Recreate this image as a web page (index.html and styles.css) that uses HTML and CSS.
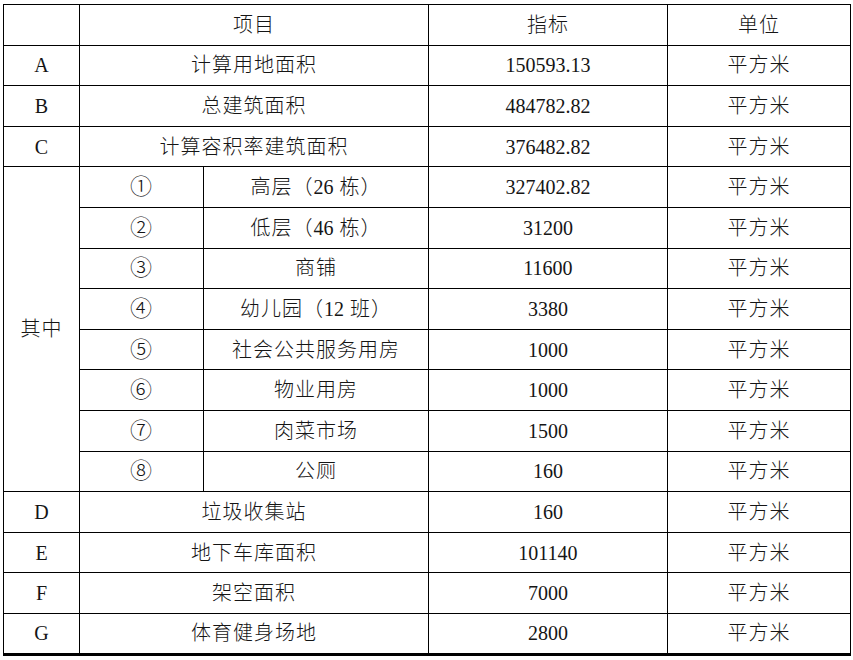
FILE: index.html
```html
<!DOCTYPE html>
<html lang="zh">
<head>
<meta charset="utf-8">
<link rel="stylesheet" href="styles.css">
</head>
<body>
<table class="tbl">
  <colgroup>
    <col class="c1"><col class="c2"><col class="c3"><col class="c4"><col class="c5">
  </colgroup>
  <tr><td></td><td colspan="2">项目</td><td>指标</td><td>单位</td></tr>
  <tr><td class="num">A</td><td colspan="2">计算用地面积</td><td class="num">150593.13</td><td>平方米</td></tr>
  <tr><td class="num">B</td><td colspan="2">总建筑面积</td><td class="num">484782.82</td><td>平方米</td></tr>
  <tr><td class="num">C</td><td colspan="2">计算容积率建筑面积</td><td class="num">376482.82</td><td>平方米</td></tr>
  <tr><td rowspan="8">其中</td><td class="circ">①</td><td>高层（<span class="n">26</span> 栋）</td><td class="num">327402.82</td><td>平方米</td></tr>
  <tr><td class="circ">②</td><td>低层（<span class="n">46</span> 栋）</td><td class="num">31200</td><td>平方米</td></tr>
  <tr><td class="circ">③</td><td>商铺</td><td class="num">11600</td><td>平方米</td></tr>
  <tr><td class="circ">④</td><td>幼儿园（<span class="n">12</span> 班）</td><td class="num">3380</td><td>平方米</td></tr>
  <tr><td class="circ">⑤</td><td>社会公共服务用房</td><td class="num">1000</td><td>平方米</td></tr>
  <tr><td class="circ">⑥</td><td>物业用房</td><td class="num">1000</td><td>平方米</td></tr>
  <tr><td class="circ">⑦</td><td>肉菜市场</td><td class="num">1500</td><td>平方米</td></tr>
  <tr><td class="circ">⑧</td><td>公厕</td><td class="num">160</td><td>平方米</td></tr>
  <tr><td class="num">D</td><td colspan="2">垃圾收集站</td><td class="num">160</td><td>平方米</td></tr>
  <tr><td class="num">E</td><td colspan="2">地下车库面积</td><td class="num">101140</td><td>平方米</td></tr>
  <tr><td class="num">F</td><td colspan="2">架空面积</td><td class="num">7000</td><td>平方米</td></tr>
  <tr class="last"><td class="num">G</td><td colspan="2">体育健身场地</td><td class="num">2800</td><td>平方米</td></tr>
</table>
</body>
</html>
```
FILE: styles.css
```css
html, body {
  margin: 0;
  padding: 0;
  background: #fff;
}
body {
  padding: 4px 0 0 3px;
}
.tbl {
  border-collapse: collapse;
  table-layout: fixed;
  width: 847px;
  font-family: "Liberation Serif", "Noto Sans CJK SC", serif;
  font-size: 20px;
  color: #151515;
}
.tbl tr {
  height: 40.6px;
}
.c1 { width: 76px; }
.c2 { width: 124px; }
.c3 { width: 225px; }
.c4 { width: 239px; }
.c5 { width: 183px; }
.tbl td {
  border: 1px solid #000;
  text-align: center;
  vertical-align: middle;
  padding: 0;
  line-height: 20px;
  letter-spacing: 1px;
  font-weight: 300;
}
.tbl td.num {
  letter-spacing: 0;
}
.n {
  letter-spacing: 0;
}
.tbl tr.last td {
  border-bottom: 3px solid #000;
}
.tbl td.circ {
  font-family: "Noto Sans CJK SC", sans-serif;
  font-size: 22px;
  line-height: 20px;
  font-weight: 300;
  padding-bottom: 6px;
}
```
